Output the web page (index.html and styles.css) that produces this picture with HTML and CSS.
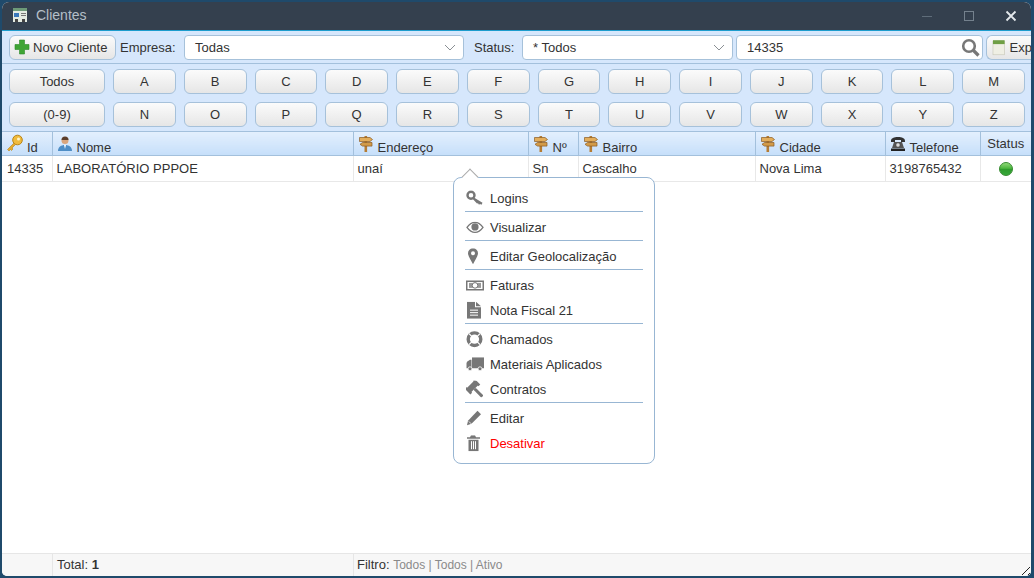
FILE: index.html
```html
<!DOCTYPE html>
<html lang="pt-BR">
<head>
  <meta charset="UTF-8" />
  <title>Clientes</title>
  <link rel="stylesheet" href="styles.css">
</head>
<body>
  <div class="window">
    <div class="titlebar">
      <svg class="title-icon" width="16" height="16" viewBox="0 0 16 16">
        <rect x="1" y="1" width="14" height="14" fill="#e4ebe2"/>
        <rect x="1" y="1" width="14" height="3" fill="#6d9a78"/>
        <rect x="2" y="6" width="5" height="4" fill="#3a78bb"/>
        <rect x="9" y="6" width="5" height="1" fill="#777"/>
        <rect x="9" y="8" width="5" height="1" fill="#777"/>
        <rect x="3" y="12" width="3" height="3" fill="#444"/>
        <rect x="10" y="12" width="3" height="3" fill="#444"/>
      </svg>
      <span class="title-text">Clientes</span>
      <div class="win-buttons">
        <svg width="12" height="12" viewBox="0 0 12 12"><path d="M1 6.500h10" stroke="#5f6d7a" stroke-width="1"/></svg>
        <svg width="12" height="12" viewBox="0 0 12 12"><rect x="1.500" y="1.500" width="9" height="9" fill="none" stroke="#74818d"/></svg>
        <svg width="12" height="12" viewBox="0 0 12 12"><path d="M1.500 1.500l9 9M10.500 1.500l-9 9" stroke="#e4e8ec" stroke-width="1.800"/></svg>
      </div>
    </div>

    <div class="toolbar">
      <button class="btn btn-new">
        <svg width="16" height="16" viewBox="0 0 16 16"><path d="M5.500 1h5v4.500h4.500v5h-4.500v4.500h-5v-4.500h-4.500v-5h4.500z" fill="#3fa535" stroke="#2d8a2a" stroke-width=".6"/></svg>
        Novo Cliente
      </button>
      <label class="tb-label lb-empresa">Empresa:</label>
      <div class="select sel-empresa">
        <span>Todas</span>
        <svg width="12" height="7" viewBox="0 0 12 7"><path d="M1 1l5 5 5-5" fill="none" stroke="#8a8f94" stroke-width="1"/></svg>
      </div>
      <label class="tb-label lb-status">Status:</label>
      <div class="select sel-status">
        <span>* Todos</span>
        <svg width="12" height="7" viewBox="0 0 12 7"><path d="M1 1l5 5 5-5" fill="none" stroke="#8a8f94" stroke-width="1"/></svg>
      </div>
      <div class="search">
        <span>14335</span>
        <svg width="19" height="19" viewBox="0 0 19 19"><circle cx="8" cy="8" r="5.800" fill="none" stroke="#777" stroke-width="2.600"/><path d="M12.500 12.500l5 5" stroke="#777" stroke-width="3.200"/></svg>
      </div>
      <button class="btn btn-exp">
        <svg width="14" height="17" viewBox="0 0 14 17"><rect x="1" y="2" width="12" height="14" fill="#efefe4" stroke="#c4c4b4" stroke-width=".6"/><rect x="1" y="1" width="12" height="4" fill="#6f9f45"/></svg>
        <span>Exp</span>
      </button>
    </div>

    <div class="letters">
      <button class="btn">Todos</button>
      <button class="btn">A</button><button class="btn">B</button><button class="btn">C</button><button class="btn">D</button>
      <button class="btn">E</button><button class="btn">F</button><button class="btn">G</button><button class="btn">H</button>
      <button class="btn">I</button><button class="btn">J</button><button class="btn">K</button><button class="btn">L</button>
      <button class="btn">M</button>
      <button class="btn">(0-9)</button>
      <button class="btn">N</button><button class="btn">O</button><button class="btn">P</button><button class="btn">Q</button>
      <button class="btn">R</button><button class="btn">S</button><button class="btn">T</button><button class="btn">U</button>
      <button class="btn">V</button><button class="btn">W</button><button class="btn">X</button><button class="btn">Y</button>
      <button class="btn">Z</button>
    </div>

    <svg width="0" height="0" class="defs">
      <defs>
        <symbol id="sign" viewBox="0 0 16 16">
          <rect x="6.500" y="0" width="2.600" height="16" fill="#b57c34"/>
          <path d="M1.500 1.500h10.500l2.500 2-2.500 2h-10.500z" fill="#e3ad5a" stroke="#8a5a22" stroke-width=".7"/>
          <path d="M14 6.500h-9.500l-2.500 1.800 2.500 1.800h9.500z" fill="#d29a48" stroke="#8a5a22" stroke-width=".7"/>
        </symbol>
      </defs>
    </svg>

    <table class="grid">
      <colgroup>
        <col class="c-id"><col class="c-nome"><col class="c-end"><col class="c-num">
        <col class="c-bairro"><col class="c-cidade"><col class="c-tel"><col class="c-status">
      </colgroup>
      <thead>
        <tr>
          <th><svg width="18" height="18" viewBox="0 0 18 18" class="key"><circle cx="11.500" cy="6" r="4.800" fill="#f0bb3c" stroke="#b98518"/><circle cx="12.500" cy="5" r="1.500" fill="#fff3c4"/><path d="M8 9l-6.500 6.500 1.500 1.500 1.500-1.500 1 1 1.500-1.500-1-1 3.500-3.500z" fill="#e5ab2f" stroke="#b98518" stroke-width=".6"/></svg>Id</th>
          <th><svg width="16" height="16" viewBox="0 0 16 16" class="ic"><circle cx="8" cy="4.500" r="3.500" fill="#d9a57c"/><path d="M4.500 4a3.500 3.500 0 0 1 7 0z" fill="#5b3d2a"/><path d="M1 15c0-4 3-6 7-6s7 2 7 6z" fill="#4f8ec6"/><path d="M7 9h2l-1 4z" fill="#fff"/></svg>Nome</th>
          <th><svg class="ic" width="16" height="16"><use href="#sign"/></svg>Endereço</th>
          <th><svg class="ic" width="16" height="16"><use href="#sign"/></svg>Nº</th>
          <th><svg class="ic" width="16" height="16"><use href="#sign"/></svg>Bairro</th>
          <th><svg class="ic" width="16" height="16"><use href="#sign"/></svg>Cidade</th>
          <th><svg width="16" height="16" viewBox="0 0 16 16" class="ic"><path d="M1 5c0-3 3-4 7-4s7 1 7 4v1h-4v-2h-6v2h-4z" fill="#333"/><path d="M4 6h8l2 6h-12z" fill="#555"/><circle cx="8" cy="9" r="2.200" fill="#ddd" stroke="#333" stroke-width=".6"/><rect x="1" y="12.500" width="14" height="2.500" fill="#222"/></svg>Telefone</th>
          <th class="th-status">Status</th>
        </tr>
      </thead>
      <tbody>
        <tr>
          <td>14335</td>
          <td>LABORATÓRIO PPPOE</td>
          <td>unaí</td>
          <td>Sn</td>
          <td>Cascalho</td>
          <td>Nova Lima</td>
          <td>3198765432</td>
          <td class="td-status"><span class="dot"></span></td>
        </tr>
      </tbody>
    </table>

    <div class="footer">
      <div class="f-a"></div>
      <div class="f-b">Total: <b>1</b></div>
      <div class="f-c">Filtro: <span class="muted">Todos | Todos | Ativo</span></div>
    </div>
    <div class="grip"></div>
  </div>

  <div class="menu">
    <span class="arrow"></span>
    <div class="item"><svg width="18" height="16" viewBox="0 0 18 16"><circle cx="5" cy="5" r="3.500" fill="none" stroke="#777" stroke-width="2.400"/><path d="M7.500 7l9 5.500-1 2-1.500-.8-1 .8-1-1.500-1 .3-4.500-4.800z" fill="#777"/></svg>Logins</div>
    <hr>
    <div class="item"><svg width="18" height="12" viewBox="0 0 18 12"><path d="M1 6c2.500-3.500 5-5 8-5s5.500 1.500 8 5c-2.500 3.500-5 5-8 5s-5.500-1.500-8-5z" fill="none" stroke="#777" stroke-width="1.300"/><circle cx="9" cy="5.500" r="3.600" fill="#777"/></svg>Visualizar</div>
    <hr>
    <div class="item"><svg width="18" height="16" viewBox="0 0 18 16"><path fill-rule="evenodd" d="M9 0a5 5 0 0 1 5 5c0 3-3 7-5 11-2-4-5-8-5-11a5 5 0 0 1 5-5zm0 3a2 2 0 1 0 0 4 2 2 0 0 0 0-4z" fill="#777" transform="translate(-2 0)"/></svg>Editar Geolocalização</div>
    <hr>
    <div class="item"><svg width="18" height="12" viewBox="0 0 18 12"><path fill-rule="evenodd" d="M0 1h18v10h-18zm1.500 1.500v7h15v-7z" fill="#777"/><rect x="3" y="3.500" width="12" height="5" fill="#999"/><circle cx="9" cy="6" r="2.800" fill="#fff" stroke="#777"/></svg>Faturas</div>
    <div class="item"><svg width="18" height="17" viewBox="0 0 18 17"><path d="M1 0h8v5.500h6v11.500h-14z" fill="#777"/><path d="M10 0l5 4.500h-5z" fill="#777"/><path d="M4 8.500h8M4 11h8M4 13.500h8" stroke="#fff" stroke-width="1"/></svg>Nota Fiscal 21</div>
    <hr>
    <div class="item"><svg width="18" height="17" viewBox="0 0 18 17"><circle cx="8.500" cy="8.500" r="6.300" fill="none" stroke="#777" stroke-width="3.400"/><path d="M3 3l3 3M14 3l-3 3M3 14l3-3M14 14l-3-3" stroke="#fff" stroke-width="1.300"/></svg>Chamados</div>
    <div class="item"><svg width="18" height="14" viewBox="0 0 18 14"><path d="M6 0h12v11h-12zM1 4.500l3-2h1.500v8.500h-5v-5z" fill="#777"/><circle cx="4" cy="11.500" r="2" fill="#777" stroke="#fff" stroke-width=".8"/><circle cx="14" cy="11.500" r="2" fill="#777" stroke="#fff" stroke-width=".8"/></svg>Materiais Aplicados</div>
    <div class="item"><svg width="18" height="17" viewBox="0 0 18 17"><g transform="translate(6.500 6) rotate(45)" fill="#777"><rect x="-3" y="-6" width="6" height="12"/><rect x="-4" y="-7" width="8" height="2.500"/><rect x="-4" y="4.500" width="8" height="2.500"/><rect x="3" y="-1.500" width="11" height="3" rx="1"/></g></svg>Contratos</div>
    <hr>
    <div class="item"><svg width="18" height="16" viewBox="0 0 18 16"><path d="M11.500 0.500l3.500 3.500-9.500 9.500-4.500 1.500 1-4.500z" fill="#777"/><path d="M2.800 11.200l2.500 2.500" stroke="#fff" stroke-width=".8"/></svg>Editar</div>
    <div class="item item-red"><svg width="18" height="16" viewBox="0 0 18 16"><path d="M5 0h4l1 2h4v1.500h-13v-1.500h3z" fill="#777"/><path d="M2.500 4.500h10v11.500h-10z" fill="#777"/><path d="M5.500 6v8M7.500 6v8M9.500 6v8" stroke="#fff" stroke-width="1"/></svg>Desativar</div>
  </div>
</body>
</html>
```

FILE: styles.css
```css
html, body {
  margin: 0;
  padding: 0;
  height: 578px;
  overflow: hidden;
}
body {
  background-color: #1f4a6b;
  font-family: "Liberation Sans", sans-serif;
  font-size: 13px;
  color: #333;
  position: relative;
}
.window {
  box-sizing: border-box;
  height: 574px;
  margin: 2px 3px 0 2px;
  background: #fff;
  border-radius: 7px 7px 5px 5px;
  overflow: hidden;
  display: flex;
  flex-direction: column;
  position: relative;
}
.titlebar {
  flex: none;
  height: 28px;
  background: #34404e;
  border-bottom: 1px solid #1c9ccd;
  display: flex;
  align-items: center;
  padding: 0 14px 0 10px;
}
.title-icon {
  margin-top: -3px;
}
.title-text {
  margin-left: 8px;
  margin-top: -2px;
  font-size: 14px;
  color: #b4bfc8;
}
.win-buttons {
  margin-left: auto;
  display: flex;
  gap: 30px;
}
.toolbar {
  flex: none;
  height: 33px;
  box-sizing: border-box;
  background: #d6e7fc;
  border-bottom: 1px solid #a3c0dc;
  display: flex;
  align-items: center;
  padding: 2px 0 2px 7px;
  overflow: hidden;
  white-space: nowrap;
}
.btn {
  font-family: inherit;
  font-size: 13px;
  color: #333;
  height: 25px;
  padding: 0;
  border: 1px solid #a6c1da;
  border-radius: 6px;
  background: linear-gradient(#fbfbfb, #e6e6e6);
}
.btn-new {
  width: 107px;
  flex: none;
  display: flex;
  align-items: center;
  gap: 3px;
  padding-left: 4px;
}
.tb-label {
  flex: none;
}
.lb-empresa {
  margin-left: 4px;
  width: 64px;
}
.select, .search {
  box-sizing: border-box;
  flex: none;
  height: 25px;
  background: #fff;
  border: 1px solid #a6c1da;
  border-radius: 4px;
  display: flex;
  align-items: center;
  justify-content: space-between;
}
.sel-empresa {
  width: 280px;
  padding: 0 7px 0 10px;
}
.lb-status {
  margin-left: 10px;
  width: 48px;
}
.sel-status {
  width: 211px;
  padding: 0 7px 0 10px;
}
.search {
  width: 247px;
  margin-left: 3px;
  padding: 0 2px 0 10px;
}
.btn-exp {
  flex: none;
  width: 46px;
  margin-left: 3px;
  display: flex;
  align-items: center;
  gap: 4px;
  padding-left: 5px;
  border-right: none;
  border-radius: 6px 0 0 6px;
}
.letters {
  flex: none;
  box-sizing: border-box;
  height: 68px;
  background: #d6e7fc;
  border-bottom: 1px solid #a3c0dc;
  padding: 5px 6px 0 7px;
  display: grid;
  grid-template-columns: 96px repeat(13, 1fr);
  grid-auto-rows: 25px;
  gap: 8px;
}
.defs {
  position: absolute;
}
.grid {
  flex: none;
  width: 100%;
  table-layout: fixed;
  border-collapse: collapse;
}
.c-id { width: 50px; }
.c-nome { width: 301px; }
.c-end { width: 175px; }
.c-num { width: 50px; }
.c-bairro { width: 177px; }
.c-cidade { width: 130px; }
.c-tel { width: 95px; }
.grid th {
  height: 23px;
  padding: 0 0 0 4px;
  box-sizing: border-box;
  font-weight: normal;
  text-align: left;
  white-space: nowrap;
  vertical-align: bottom;
  line-height: 15px;
  background: linear-gradient(#e3effd, #c6dffa);
  border-right: 1px solid #a3c0dc;
  border-bottom: 1px solid #a3c0dc;
}
.grid th:last-child {
  border-right: none;
}
.grid th svg {
  vertical-align: 0;
  margin-right: 4px;
}
.grid th .key {
  margin-right: 3px;
  margin-top: -4px;
}
.grid th.th-status {
  text-align: center;
  vertical-align: middle;
  padding: 0;
}
.grid td {
  height: 26px;
  box-sizing: border-box;
  padding: 1px 4px 0 4px;
  border-right: 1px solid #e8e8e8;
  border-bottom: 1px solid #e8e8e8;
  white-space: nowrap;
  overflow: hidden;
}
.grid td:first-child {
  padding-left: 5px;
}
.grid td:last-child {
  border-right: none;
}
.td-status {
  text-align: center;
}
.dot {
  display: inline-block;
  width: 14px;
  height: 14px;
  border-radius: 50%;
  vertical-align: middle;
  background: linear-gradient(#8fd878 0, #4cb63f 45%, #2f9a2c 50%, #36a83a 100%);
  border: 1px solid #3a8c34;
  box-sizing: border-box;
}
.footer {
  flex: none;
  margin-top: auto;
  height: 23px;
  box-sizing: border-box;
  background: #f7f7f7;
  border-top: 1px solid #e6e6e6;
  display: flex;
  line-height: 22px;
  white-space: nowrap;
}
.f-a {
  width: 50px;
  border-right: 1px solid #e6e6e6;
}
.f-b {
  width: 296px;
  padding-left: 4px;
  border-right: 1px solid #e6e6e6;
}
.f-c {
  padding-left: 3px;
}
.muted {
  color: #8a8a8a;
  font-size: 12px;
}
.grip {
  position: absolute;
  right: 1px;
  bottom: 1px;
  width: 12px;
  height: 12px;
  background: repeating-linear-gradient(135deg, transparent 0 3px, #222 3px 4px);
  clip-path: polygon(100% 0, 100% 100%, 0 100%);
}
.menu {
  position: absolute;
  left: 453px;
  top: 177px;
  width: 202px;
  height: 287px;
  box-sizing: border-box;
  background: #fff;
  border: 1px solid #98b6d3;
  border-radius: 8px;
  padding: 8px 11px 0;
}
.arrow {
  position: absolute;
  left: 10px;
  top: -7px;
  width: 11px;
  height: 11px;
  background: #fff;
  border-left: 1px solid #aaa;
  border-top: 1px solid #aaa;
  transform: rotate(45deg);
}
.item {
  height: 25px;
  display: flex;
  align-items: center;
  position: relative;
  padding-left: 25px;
  color: #333;
}
.item svg {
  position: absolute;
  left: 1px;
  top: 50%;
  transform: translateY(-55%);
}
.item-red {
  color: #f00;
}
.menu hr {
  margin: 0 0 3px;
  border: none;
  border-top: 1px solid #98b6d3;
}
```
